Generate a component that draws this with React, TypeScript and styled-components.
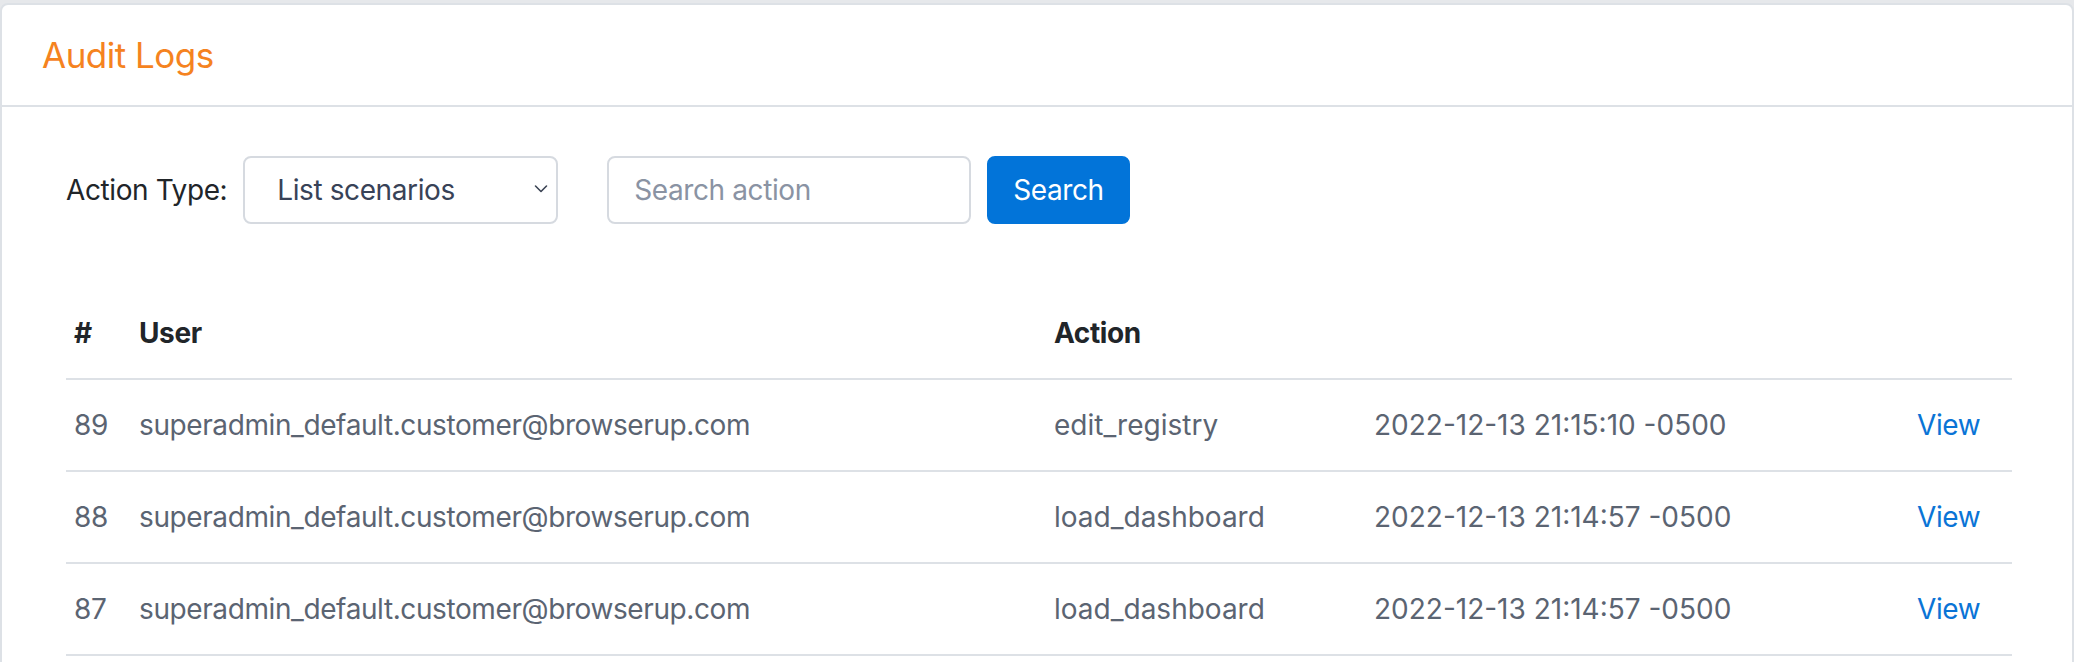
import React from "react";
import styled, { createGlobalStyle } from "styled-components";

const GlobalStyle = createGlobalStyle`
  * { box-sizing: border-box; }
  html, body { margin: 0; padding: 0; }
  body {
    background: #e6e8eb;
    font-family: Inter, "Noto Sans", "Liberation Sans", sans-serif;
    -webkit-font-smoothing: antialiased;
  }
`;

const Card = styled.section`
  margin-top: 3px;
  background: #ffffff;
  border: 2px solid #dde1e6;
  border-radius: 8px 8px 0 0;
  min-height: 700px;
`;

const CardHeader = styled.header`
  padding: 29px 40px;
  border-bottom: 2px solid #dde1e6;
`;

const Title = styled.h1`
  margin: 0;
  font-size: 35px;
  line-height: 42px;
  font-weight: 400;
  letter-spacing: -0.5px;
  color: #f5831f;
`;

const CardBody = styled.div`
  padding: 49px 60px 0 64px;
  letter-spacing: -0.4px;
`;

const FilterBar = styled.form`
  display: flex;
  align-items: center;
  height: 68px;
`;

const Label = styled.label`
  font-size: 28px;
  color: #212529;
  margin-right: 16px;
`;

const SelectWrap = styled.div`
  position: relative;
  width: 315px;
  height: 68px;
  margin-right: 49px;
`;

const Select = styled.select`
  appearance: none;
  -webkit-appearance: none;
  width: 100%;
  height: 100%;
  padding: 0 60px 0 32px;
  font-family: inherit;
  font-size: 28px;
  letter-spacing: -0.4px;
  color: #384257;
  background: #fff;
  border: 2px solid #d6dae0;
  border-radius: 8px;
  outline: none;
`;

const Chevron = styled.svg`
  position: absolute;
  right: 10px;
  top: 28px;
  width: 14px;
  height: 10px;
  pointer-events: none;
`;

const SearchInput = styled.input`
  width: 364px;
  height: 68px;
  padding: 0 25px;
  font-family: inherit;
  font-size: 28px;
  letter-spacing: -0.4px;
  color: #384257;
  border: 2px solid #d6dae0;
  border-radius: 8px;
  margin-right: 16px;
  outline: none;
  &::placeholder { color: #8a93a3; }
`;

const Button = styled.button`
  height: 68px;
  padding: 0 24px;
  font-family: inherit;
  font-size: 28px;
  letter-spacing: -0.4px;
  color: #fff;
  background: #0274d9;
  border: 2px solid #0274d9;
  border-radius: 8px;
  cursor: pointer;
`;

const Table = styled.table`
  margin-top: 64px;
  width: 100%;
  table-layout: fixed;
  border-collapse: collapse;
  font-size: 28px;
`;

const Th = styled.th`
  text-align: left;
  font-weight: 700;
  color: #212529;
  padding: 24px 8px;
  line-height: 42px;
  border-bottom: 2px solid #dde1e6;
`;

const Td = styled.td<{ $wide?: boolean }>`
  color: #5b6472;
  padding: 24px 8px;
  line-height: 42px;
  border-bottom: 2px solid #dde1e6;
  white-space: nowrap;
  letter-spacing: ${(p) => (p.$wide ? "0" : "-0.4px")};
`;

const ViewLink = styled.a`
  color: #0a74d6;
  text-decoration: none;
`;

const rows = [
  { id: 89, user: "superadmin_default.customer@browserup.com", action: "edit_registry", date: "2022-12-13 21:15:10 -0500" },
  { id: 88, user: "superadmin_default.customer@browserup.com", action: "load_dashboard", date: "2022-12-13 21:14:57 -0500" },
  { id: 87, user: "superadmin_default.customer@browserup.com", action: "load_dashboard", date: "2022-12-13 21:14:57 -0500" },
];

export default function App() {
  return (
    <>
      <GlobalStyle />
      <Card>
        <CardHeader>
          <Title>Audit Logs</Title>
        </CardHeader>
        <CardBody>
          <FilterBar onSubmit={(e) => e.preventDefault()}>
            <Label htmlFor="action-type">Action Type:</Label>
            <SelectWrap>
              <Select id="action-type" defaultValue="list_scenarios">
                <option value="list_scenarios">List scenarios</option>
                <option value="edit_registry">Edit registry</option>
                <option value="load_dashboard">Load dashboard</option>
              </Select>
              <Chevron viewBox="0 0 14 10" fill="none">
                <path d="M1.5 2L7 7.5L12.5 2" stroke="#3b4454" strokeWidth="1.6" strokeLinecap="round" strokeLinejoin="round" />
              </Chevron>
            </SelectWrap>
            <SearchInput placeholder="Search action" />
            <Button type="submit">Search</Button>
          </FilterBar>
          <Table>
            <colgroup>
              <col style={{ width: 65 }} />
              <col style={{ width: 915 }} />
              <col style={{ width: 320 }} />
              <col style={{ width: 543 }} />
              <col />
            </colgroup>
            <thead>
              <tr>
                <Th>#</Th>
                <Th>User</Th>
                <Th>Action</Th>
                <Th></Th>
                <Th></Th>
              </tr>
            </thead>
            <tbody>
              {rows.map((r) => (
                <tr key={r.id}>
                  <Td>{r.id}</Td>
                  <Td>{r.user}</Td>
                  <Td $wide>{r.action}</Td>
                  <Td $wide>{r.date}</Td>
                  <Td>
                    <ViewLink href="#">View</ViewLink>
                  </Td>
                </tr>
              ))}
            </tbody>
          </Table>
        </CardBody>
      </Card>
    </>
  );
}
